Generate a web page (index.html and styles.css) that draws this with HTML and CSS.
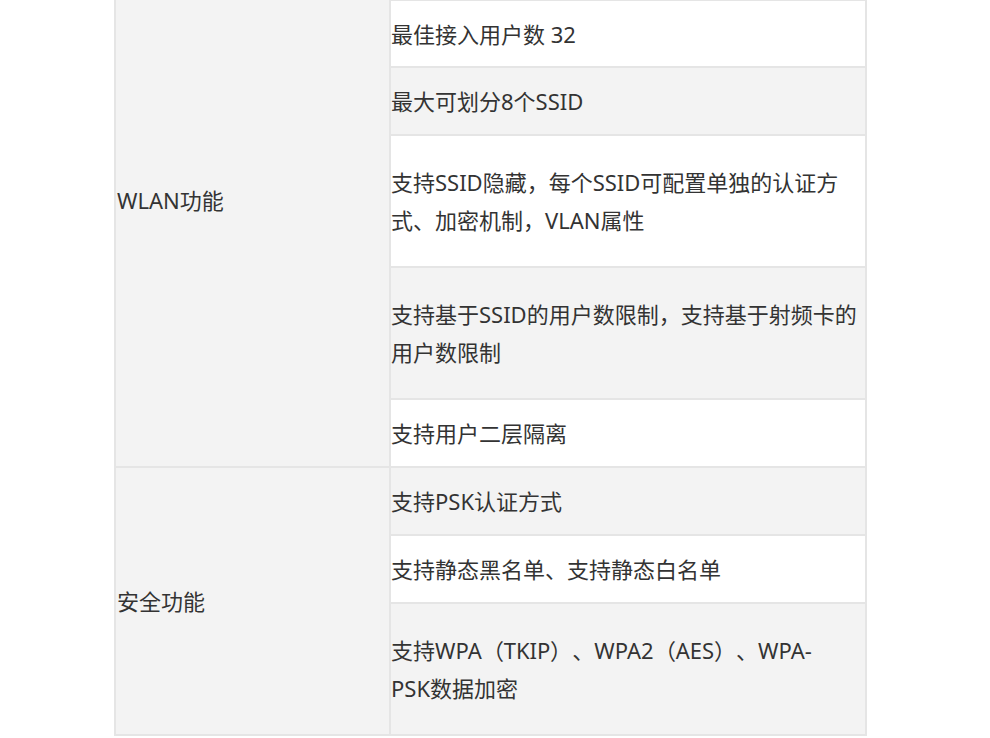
FILE: index.html
```html
<!DOCTYPE html>
<html lang="zh-CN">
<head>
<meta charset="utf-8">
<title>规格参数</title>
<link rel="stylesheet" href="styles.css">
</head>
<body>
<div class="page">
  <table class="spec">
    <colgroup>
      <col class="col-name">
      <col class="col-value">
    </colgroup>
    <tbody>
      <tr class="row-hidden">
        <td class="name" rowspan="6">WLAN功能</td>
        <td class="value odd"></td>
      </tr>
      <tr class="row-first">
        <td class="value">最佳接入用户数 32</td>
      </tr>
      <tr class="row-single">
        <td class="value odd">最大可划分8个SSID</td>
      </tr>
      <tr class="row-double">
        <td class="value">支持SSID隐藏，每个SSID可配置单独的认证方式、加密机制，VLAN属性</td>
      </tr>
      <tr class="row-double">
        <td class="value odd">支持基于SSID的用户数限制，支持基于射频卡的用户数限制</td>
      </tr>
      <tr class="row-single">
        <td class="value">支持用户二层隔离</td>
      </tr>
      <tr class="row-single">
        <td class="name" rowspan="3">安全功能</td>
        <td class="value odd">支持PSK认证方式</td>
      </tr>
      <tr class="row-single">
        <td class="value">支持静态黑名单、支持静态白名单</td>
      </tr>
      <tr class="row-double">
        <td class="value odd">支持WPA<span class="paren">（</span>TKIP<span class="paren">）</span>、WPA2<span class="paren">（</span>AES<span class="paren">）</span>、WPA-<br>PSK数据加密</td>
      </tr>
    </tbody>
  </table>
</div>
</body>
</html>
```
FILE: styles.css
```css
html, body {
  margin: 0;
  padding: 0;
  background: #ffffff;
}

.page {
  padding-left: 114px;
  font-family: "Noto Sans", "Noto Sans CJK SC", sans-serif;
  font-size: 22px;
  line-height: 38px;
  color: #333333;
  text-spacing-trim: space-all;
}

.spec {
  margin-top: -67px;
  border-collapse: separate;
  border-spacing: 0;
  table-layout: fixed;
  width: 753px;
  border-left: 2px solid #e5e5e5;
}

.col-name { width: 275px; }
.col-value { width: 476px; }

.spec td {
  box-sizing: border-box;
  padding: 0;
  vertical-align: middle;
  border-right: 2px solid #e5e5e5;
  border-bottom: 2px solid #e5e5e5;
  word-break: normal;
}

.spec .name {
  background: #f3f3f3;
  padding-left: 1px;
}

.spec .value {
  background: #ffffff;
  padding-right: 8px;
}

.spec .value.odd {
  background: #f3f3f3;
}

.paren {
  display: inline-block;
  width: 22px;
  text-align: center;
  font-family: "Noto Sans", sans-serif;
}

.row-hidden td.value { height: 68px; }
.row-first td { height: 67px; }
.row-single td.value { height: 68px; }
.row-double td.value { height: 132px; }
```
